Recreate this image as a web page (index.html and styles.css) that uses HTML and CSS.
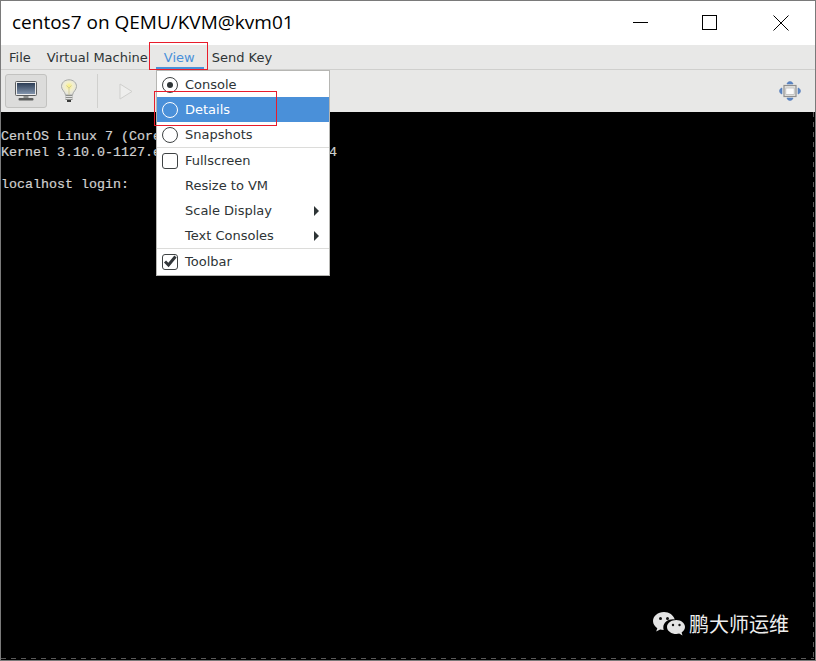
FILE: index.html
```html
<!DOCTYPE html>
<html lang="en">
<head>
<meta charset="utf-8">
<title>centos7 on QEMU/KVM@kvm01</title>
<link rel="stylesheet" href="styles.css">
</head>
<body>
<div class="window">
  <header class="titlebar">
    <span class="title">centos7 on QEMU/KVM@kvm01</span>
    <div class="controls">
      <svg class="ctl ctl-min" viewBox="0 0 16 16"><path d="M0 7.500H15" stroke="#000" stroke-width="1" fill="none"/></svg>
      <svg class="ctl" viewBox="0 0 16 16"><rect x="0.500" y="0.500" width="14" height="14" stroke="#000" fill="none"/></svg>
      <svg class="ctl" viewBox="0 0 16 16"><path d="M0.500 0.500L15.500 15.500M15.500 0.500L0.500 15.500" stroke="#000" stroke-width="1" fill="none"/></svg>
    </div>
  </header>
  <nav class="menubar">
    <span class="menu-title">File</span>
    <span class="menu-title">Virtual Machine</span>
    <span class="menu-title active">View</span>
    <span class="menu-title">Send Key</span>
  </nav>
  <div class="toolbar">
    <button class="tool pressed" type="button">
      <svg width="24" height="22" viewBox="0 0 24 22">
        <defs><linearGradient id="scr" x1="0" y1="0" x2="0" y2="1"><stop offset="0" stop-color="#2c3d55"/><stop offset="1" stop-color="#8294ac"/></linearGradient></defs>
        <rect x="1.500" y="1.500" width="21" height="14" rx="1" fill="#ececec" stroke="#5a5c5e"/>
        <rect x="3" y="3" width="18" height="11" fill="url(#scr)"/>
        <rect x="9.500" y="16" width="5" height="2" fill="#8a8c8a"/>
        <rect x="4.500" y="18" width="15" height="2.500" rx="1" fill="#5c5e5e"/>
      </svg>
    </button>
    <span class="bulb">
      <svg width="18" height="24" viewBox="0 0 18 24">
        <defs><radialGradient id="glow" cx="0.5" cy="0.42" r="0.6"><stop offset="0" stop-color="#fbf07a"/><stop offset="0.45" stop-color="#f3f0cf"/><stop offset="1" stop-color="#dfe0de"/></radialGradient></defs>
        <path d="M9 0.800C4.500 0.800 1.500 3.800 1.500 7.500C1.500 11 5 12.500 5.500 16H12.500C13 12.500 16.500 11 16.500 7.500C16.500 3.800 13.500 0.800 9 0.800Z" fill="url(#glow)" stroke="#a6a8a6"/>
        <path d="M6.500 6.500L9 9L11.500 6.500M9 9V16" stroke="#c9c390" fill="none" stroke-width="0.800"/>
        <rect x="5.500" y="16" width="7" height="5" fill="#8d8f8c"/>
        <path d="M5.500 17.500H12.500M5.500 19.500H12.500" stroke="#e2e2e2"/>
        <rect x="7" y="21" width="4" height="2" fill="#3c3d3c"/>
      </svg>
    </span>
    <span class="tool-sep"></span>
    <span class="play">
      <svg width="14" height="17" viewBox="0 0 14 17"><path d="M1 1L13 8.500L1 16Z" fill="#eeeeed" stroke="#cfcfcd"/></svg>
    </span>
    <span class="tool-fill"></span>
    <span class="fit">
      <svg width="22" height="20" viewBox="0 0 22 20">
        <path d="M11 0.500C12.500 0.500 14 1.800 14 3H8C8 1.800 9.500 0.500 11 0.500ZM11 19.500C12.500 19.500 14 18.200 14 17H8C8 18.200 9.500 19.500 11 19.500ZM0.500 10C0.500 8.500 1.800 7 3 7V13C1.800 13 0.500 11.500 0.500 10ZM21.500 10C21.500 8.500 20.200 7 19 7V13C20.200 13 21.500 11.500 21.500 10Z" fill="#5c86c4" stroke="#4a74b4" stroke-width="0.500"/>
        <rect x="5" y="4.500" width="12" height="11" fill="#e6e6e4" stroke="#8f8f8f" stroke-width="1.200"/>
        <rect x="6.800" y="7" width="8.400" height="6.500" fill="#fafafa" stroke="#b2b2b2" stroke-width="0.700"/>
      </svg>
    </span>
  </div>
  <main class="console">
    <p class="console-line">CentOS Linux 7 (Core)</p>
    <p class="console-line">Kernel 3.10.0-1127.el7.x86_64 on an x86_64</p>
    <p class="console-line">&nbsp;</p>
    <p class="console-line">localhost login:</p>
  </main>
</div>

<div class="dropdown">
  <div class="item"><span class="mark radio checked"></span><span class="label">Console</span></div>
  <div class="item selected"><span class="mark radio"></span><span class="label">Details</span></div>
  <div class="item"><span class="mark radio"></span><span class="label">Snapshots</span></div>
  <div class="sep"></div>
  <div class="item"><span class="mark check"></span><span class="label">Fullscreen</span></div>
  <div class="item"><span class="mark none"></span><span class="label">Resize to VM</span></div>
  <div class="item"><span class="mark none"></span><span class="label">Scale Display</span><span class="arrow"></span></div>
  <div class="item"><span class="mark none"></span><span class="label">Text Consoles</span><span class="arrow"></span></div>
  <div class="sep"></div>
  <div class="item"><span class="mark check">
    <svg width="16" height="16" viewBox="0 0 16 16"><path d="M3 7.500L6.500 11L13.500 2.500" fill="none" stroke="#33373a" stroke-width="3"/></svg>
  </span><span class="label">Toolbar</span></div>
</div>

<div class="callout callout-view"></div>
<div class="callout callout-details"></div>

<div class="watermark">
  <svg width="34" height="26" viewBox="0 0 34 26">
    <path d="M12 1C5.900 1 1 5 1 10C1 13 2.800 15.500 5.300 17.200L4.200 20.500L8.100 18.500C9.300 18.800 10.400 19 11.700 19C11.400 18 11.300 17.300 11.300 16.500C11.300 11.700 15.700 8.300 21 8.300L22.700 8.400C21.500 4.200 17.200 1 12 1Z" fill="#e4e4e4"/>
    <path d="M33 16C33 11.800 28.700 9 24.300 9C19.700 9 15 11.800 15 16C15 20.300 19.700 23 24.300 23C25.300 23 26.200 22.800 27.200 22.500L30.500 24.400L29.600 21.500C31.700 20.100 33 18.200 33 16Z" fill="#e4e4e4"/>
    <circle cx="8.500" cy="7.500" r="1.500" fill="#111"/><circle cx="15.500" cy="7.500" r="1.500" fill="#111"/>
    <circle cx="21" cy="14" r="1.200" fill="#111"/><circle cx="27.500" cy="14" r="1.200" fill="#111"/>
  </svg>
  <span class="wm-text">鹏大师运维</span>
</div>
<div class="dash dash-right"></div>
<div class="dash dash-bottom"></div>
</body>
</html>
```
FILE: styles.css
```css
* { box-sizing: border-box; }
html, body { margin: 0; padding: 0; width: 816px; height: 661px; overflow: hidden; background: #fff; }
body { position: relative; }

.window {
  display: flex;
  flex-direction: column;
  width: 816px;
  height: 661px;
  border: 1px solid #7a7a7a;
}

.titlebar {
  flex: 0 0 44px;
  display: flex;
  align-items: center;
  justify-content: space-between;
  background: #fff;
  padding-left: 11px;
}
.title { font: 19px/24px "Open Sans", sans-serif; color: #000; position: relative; top: -1px; }
.controls { display: flex; align-items: center; gap: 55px; padding-right: 26px; position: relative; top: 0; }
.ctl { width: 16px; height: 16px; display: block; }
.ctl-min { margin-right: -2px; }

.menubar {
  flex: 0 0 25px;
  display: flex;
  background: #e8e8e7;
  border-bottom: 1px solid #cfcfcd;
}
.menu-title {
  font: 13px/25px "DejaVu Sans", sans-serif;
  color: #2e3436;
  padding: 0 8px;
  height: 24px;
}
.menu-title.active { color: #4a90d9; box-shadow: inset 0 -2px 0 #4a90d9; padding-right: 9px; }

.toolbar {
  flex: 0 0 42px;
  display: flex;
  align-items: center;
  background: #e8e8e7;
  padding: 0 14px 0 4px;
}
.tool {
  width: 42px;
  height: 34px;
  padding: 0;
  margin: 0;
  display: flex;
  align-items: center;
  justify-content: center;
  background: #dcdcdb;
  border: 1px solid #c2c2c0;
  border-radius: 3px;
}
.bulb { width: 18px; margin-left: 13px; display: flex; justify-content: center; }
.tool-sep { width: 1px; height: 34px; background: #d0d0ce; margin-left: 19px; }
.play { margin-left: 21px; display: flex; }
.tool-fill { flex: 1; }
.fit { display: flex; }

.console {
  flex: 1;
  background: #000;
  padding-top: 17px;
}
.console-line {
  margin: 0;
  font: 13.333px/16px "Liberation Mono", monospace;
  color: #d0d0d0;
  -webkit-text-stroke: 0.2px #d0d0d0;
}

.dropdown {
  position: absolute;
  left: 156px;
  top: 70px;
  width: 174px;
  height: 206px;
  background: #fff;
  border: 1px solid #b6b6b3;
  padding: 1px 0;
}
.item {
  height: 25px;
  display: flex;
  align-items: center;
  padding-left: 5px;
  font: 13px/25px "DejaVu Sans", sans-serif;
  color: #2e3436;
}
.item.selected { background: #4a90d9; color: #fff; }
.label { flex: 1; }
.mark {
  flex: 0 0 16px;
  width: 16px;
  height: 16px;
  margin-right: 7px;
  display: block;
}
.radio { border: 1px solid #3f4344; border-radius: 50%; position: relative; background: #fff; }
.selected .radio { border-color: #fff; background: transparent; }
.radio.checked::after {
  content: "";
  position: absolute;
  left: 4px;
  top: 4px;
  width: 6px;
  height: 6px;
  border-radius: 50%;
  background: #2e3436;
}
.check { border: 1px solid #3f4344; border-radius: 3px; background: #fff; position: relative; }
.check svg { position: absolute; left: -1px; top: -1px; display: block; }
.none { visibility: hidden; }
.arrow {
  width: 0;
  height: 0;
  margin-right: 10px;
  border-left: 5px solid #2e3436;
  border-top: 5px solid transparent;
  border-bottom: 5px solid transparent;
}
.sep { height: 1px; background: #dcdcda; }

.callout { position: absolute; border: 1px solid #e81c2b; }
.callout-view { left: 149px; top: 42px; width: 59px; height: 28px; }
.callout-details { left: 154px; top: 91px; width: 123px; height: 35px; }

.watermark {
  position: absolute;
  left: 652px;
  top: 611px;
  display: flex;
  align-items: center;
  gap: 3px;
}
.wm-text {
  font: 20px/26px "Noto Sans CJK SC", sans-serif;
  color: #eeeeee;
}
.dash { position: absolute; }
.dash-right {
  left: 813px;
  top: 112px;
  width: 1px;
  height: 548px;
  background: repeating-linear-gradient(to bottom, #5a5a5a 0 5px, transparent 5px 10px);
}
.dash-bottom {
  left: 1px;
  top: 658px;
  width: 813px;
  height: 1px;
  background: repeating-linear-gradient(to right, #5a5a5a 0 5px, transparent 5px 10px);
}
```
